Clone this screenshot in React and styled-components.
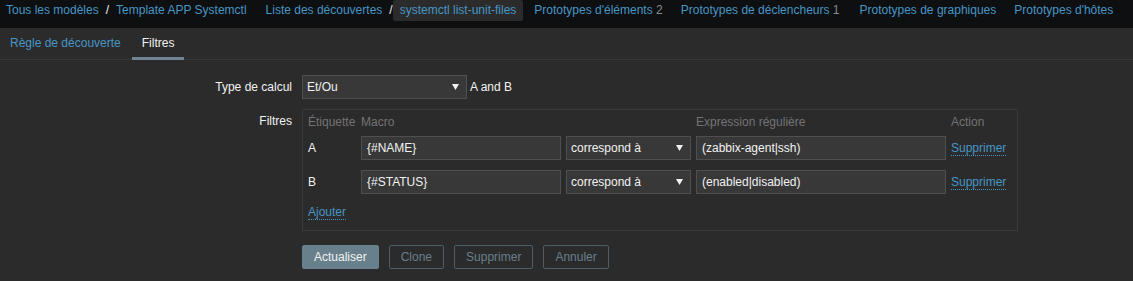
import React from "react";
import styled, { createGlobalStyle } from "styled-components";

const GlobalStyle = createGlobalStyle`
  html, body {
    margin: 0;
    padding: 0;
    background: #2b2b2b;
  }
  body {
    font-family: "Liberation Sans", Arial, sans-serif;
    font-size: 12px;
    color: #f2f2f2;
  }
  * {
    box-sizing: border-box;
  }
`;

const TopNav = styled.div`
  height: 28px;
  background: #0e0f11;
  display: flex;
  align-items: flex-start;
  padding-left: 6px;
`;

const Crumbs = styled.div`
  display: flex;
  align-items: center;
  height: 21px;
  margin-right: ${(p) => p.gap || 0}px;
`;

const NavLink = styled.a`
  color: #4796c4;
  text-decoration: none;
  line-height: 21px;
  white-space: nowrap;
  cursor: pointer;
`;

const Slash = styled.span`
  color: #f2f2f2;
  margin: 0 ${(p) => (p.tight ? 0 : 7)}px 0 7px;
  line-height: 21px;
`;

const Current = styled.span`
  display: inline-block;
  background: #2b2b2b;
  color: #4796c4;
  padding: 0 7px;
  line-height: 21px;
  border-radius: 2px;
  white-space: nowrap;
`;

const NavItem = styled(NavLink)`
  margin-right: ${(p) => p.gap || 20}px;
`;

const Count = styled.span`
  color: #8a8a8a;
`;

const TabBar = styled.div`
  display: flex;
  height: 32px;
  border-bottom: 1px solid #383838;
  background: #2b2b2b;
`;

const Tab = styled.a`
  display: block;
  padding: 0 10px;
  height: 32px;
  line-height: 30px;
  margin-right: 1px;
  color: ${(p) => (p.active ? "#f2f2f2" : "#4796c4")};
  border-bottom: 3px solid ${(p) => (p.active ? "#6e8593" : "transparent")};
  margin-bottom: -1px;
  text-decoration: none;
  cursor: pointer;
`;

const Form = styled.div`
  padding-top: 15px;
  display: grid;
  grid-template-columns: 292px auto;
  column-gap: 10px;
  row-gap: 10px;
  align-items: start;
`;

const Label = styled.div`
  text-align: right;
  line-height: 14px;
  padding-top: ${(p) => p.top || 5}px;
`;

const Field = styled.div`
  display: flex;
  align-items: center;
  gap: 3px;
`;

const Select = styled.div`
  width: ${(p) => p.width}px;
  height: 24px;
  background: #383838;
  border: 1px solid #4f4f4f;
  display: flex;
  align-items: center;
  justify-content: space-between;
  padding: 0 7px 0 4px;
  color: #f2f2f2;
  white-space: nowrap;
`;

const Arrow = () => (
  <svg width="7" height="6" viewBox="0 0 7 6">
    <polygon points="0,0 7,0 3.5,6" fill="#f2f2f2" />
  </svg>
);

const FilterBox = styled.div`
  width: 716px;
  border: 1px solid #383838;
  padding: 4px 5px 10px;
`;

const Grid = styled.div`
  display: grid;
  grid-template-columns: 48px 200px 125px 250px auto;
  column-gap: 5px;
  align-items: center;
  height: ${(p) => p.h}px;
  margin-bottom: ${(p) => p.mb || 0}px;
`;

const Head = styled.div`
  color: #737373;
  line-height: 16px;
`;

const Input = styled.div`
  height: 24px;
  background: #383838;
  border: 1px solid #4f4f4f;
  padding: 0 5px;
  line-height: 22px;
  color: #f2f2f2;
`;

const DotLink = styled.a`
  color: #4796c4;
  text-decoration: none;
  border-bottom: 1px dotted #4796c4;
  cursor: pointer;
  justify-self: start;
  line-height: 14px;
`;

const AddRow = styled.div`
  height: 16px;
  display: flex;
  align-items: center;
`;

const Buttons = styled.div`
  grid-column: 2;
  display: flex;
  gap: 10px;
  margin-top: 4px;
`;

const Button = styled.button`
  height: 24px;
  padding: 0 11px;
  font-family: inherit;
  font-size: 12px;
  border-radius: 2px;
  cursor: pointer;
  background: ${(p) => (p.primary ? "#687f8c" : "transparent")};
  color: ${(p) => (p.primary ? "#f2f2f2" : "#6a7f8b")};
  border: 1px solid ${(p) => (p.primary ? "#687f8c" : "#4c5d67")};
`;

const rows = [
  { tag: "A", macro: "{#NAME}", value: "(zabbix-agent|ssh)" },
  { tag: "B", macro: "{#STATUS}", value: "(enabled|disabled)" },
];

export default function App() {
  return (
    <>
      <GlobalStyle />
      <TopNav>
        <Crumbs gap={19}>
          <NavLink>Tous les modèles</NavLink>
          <Slash>/</Slash>
          <NavLink>Template APP Systemctl</NavLink>
        </Crumbs>
        <Crumbs gap={11}>
          <NavLink>Liste des découvertes</NavLink>
          <Slash tight>/</Slash>
          <Current>systemctl list-unit-files</Current>
        </Crumbs>
        <NavItem gap={18}>
          Prototypes d'éléments <Count>2</Count>
        </NavItem>
        <NavItem gap={20}>
          Prototypes de déclencheurs <Count>1</Count>
        </NavItem>
        <NavItem gap={18}>Prototypes de graphiques</NavItem>
        <NavItem>Prototypes d'hôtes</NavItem>
      </TopNav>

      <TabBar>
        <Tab>Règle de découverte</Tab>
        <Tab active>Filtres</Tab>
      </TabBar>

      <Form>
        <Label top={5}>Type de calcul</Label>
        <Field>
          <Select width={165}>
            Et/Ou
            <Arrow />
          </Select>
          A and B
        </Field>

        <Label top={5}>Filtres</Label>
        <FilterBox>
          <Grid h={16} mb={6}>
            <Head>Étiquette</Head>
            <Head>Macro</Head>
            <span />
            <Head>Expression régulière</Head>
            <Head>Action</Head>
          </Grid>
          {rows.map((r) => (
            <Grid h={24} mb={10} key={r.tag}>
              <span>{r.tag}</span>
              <Input>{r.macro}</Input>
              <Select width={125}>
                correspond à
                <Arrow />
              </Select>
              <Input>{r.value}</Input>
              <DotLink>Supprimer</DotLink>
            </Grid>
          ))}
          <AddRow>
            <DotLink>Ajouter</DotLink>
          </AddRow>
        </FilterBox>

        <Buttons>
          <Button primary>Actualiser</Button>
          <Button>Clone</Button>
          <Button>Supprimer</Button>
          <Button>Annuler</Button>
        </Buttons>
      </Form>
    </>
  );
}
